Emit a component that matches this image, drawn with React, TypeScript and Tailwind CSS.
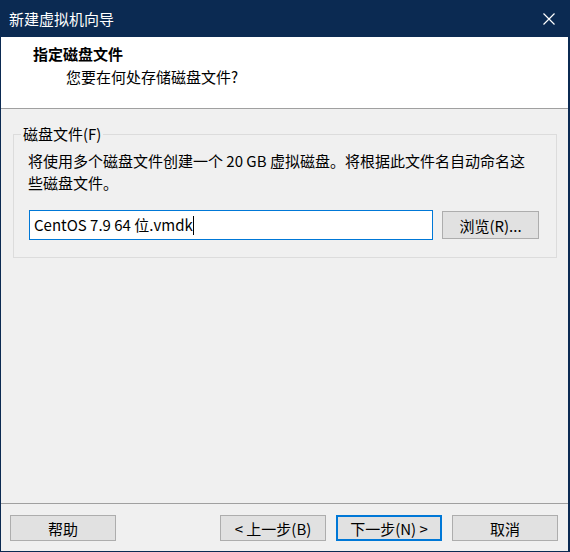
import React from 'react';

const font = { fontFamily: '"Noto Sans CJK SC", "Noto Sans", sans-serif' };

function WinButton({ label, primary }: { label: string; primary?: boolean }) {
  return (
    <button
      className={
        primary
          ? 'w-[106px] h-[26px] bg-[#e1e1e1] border-2 border-[#0078d7] text-[15px] leading-none text-black flex items-center justify-center'
          : 'w-[106px] h-[26px] bg-[#e1e1e1] border border-[#adadad] text-[15px] leading-none text-black flex items-center justify-center'
      }
    >
      {label}
    </button>
  );
}

export default function App() {
  return (
    <div
      className="w-[570px] h-[552px] bg-[#0b2a52] pl-px pr-[2px] pb-px flex flex-col"
      style={font}
    >
      {/* title bar */}
      <div className="h-[37px] shrink-0 flex items-center justify-between pl-[8px] pr-[13px]">
        <span className="text-white text-[15px] leading-none">新建虚拟机向导</span>
        <svg width="12" height="12" viewBox="0 0 12 12" className="text-white">
          <path d="M0.5 0.5 L11.5 11.5 M11.5 0.5 L0.5 11.5" stroke="currentColor" strokeWidth="1.2" />
        </svg>
      </div>

      <div className="flex-1 flex flex-col bg-[#f0f0f0]">
        {/* header */}
        <div className="h-[72px] shrink-0 bg-white border-b border-[#a0a0a0] pl-[32px] pt-[6px]">
          <div className="text-[15px] leading-[22px] font-bold text-black">指定磁盘文件</div>
          <div className="text-[15px] leading-[22px] text-black pl-[33px] pt-px">
            您要在何处存储磁盘文件?
          </div>
        </div>

        {/* body */}
        <div className="flex-1 pt-[14px] pl-[12px] pr-[11px]">
          <fieldset className="border border-[#dcdcdc] pl-[14px] pr-[14px] pb-[17px]">
            <legend className="ml-[-7px] px-[2px] text-[15px] leading-[22px] text-black">
              磁盘文件(F)
            </legend>
            <p className="pt-[5px] text-[15px] leading-[22px] text-black whitespace-nowrap">
              将使用多个磁盘文件创建一个 20 GB 虚拟磁盘。将根据此文件名自动命名这
              <br />
              些磁盘文件。
            </p>
            <div className="mt-[16px] ml-px flex items-center gap-[9px]">
              <div className="w-[404px] h-[30px] bg-white border border-[#0078d7] flex items-center pl-[4px] text-[15px] text-black">
                <span>CentOS 7.9 64 位.vmdk</span>
                <span className="w-px h-[19px] bg-black" />
              </div>
              <button className="w-[97px] h-[28px] bg-[#e1e1e1] border border-[#adadad] text-[15px] leading-none text-black flex items-center justify-center">
                浏览(R)...
              </button>
            </div>
          </fieldset>
        </div>

        {/* footer */}
        <div className="h-[48px] shrink-0 border-t border-[#a0a0a0] flex items-center pl-[9px] pr-[10px] pt-px">
          <WinButton label="帮助" />
          <div className="ml-auto flex gap-[10px]">
            <WinButton label="< 上一步(B)" />
            <WinButton label="下一步(N) >" primary />
            <WinButton label="取消" />
          </div>
        </div>
      </div>
    </div>
  );
}
